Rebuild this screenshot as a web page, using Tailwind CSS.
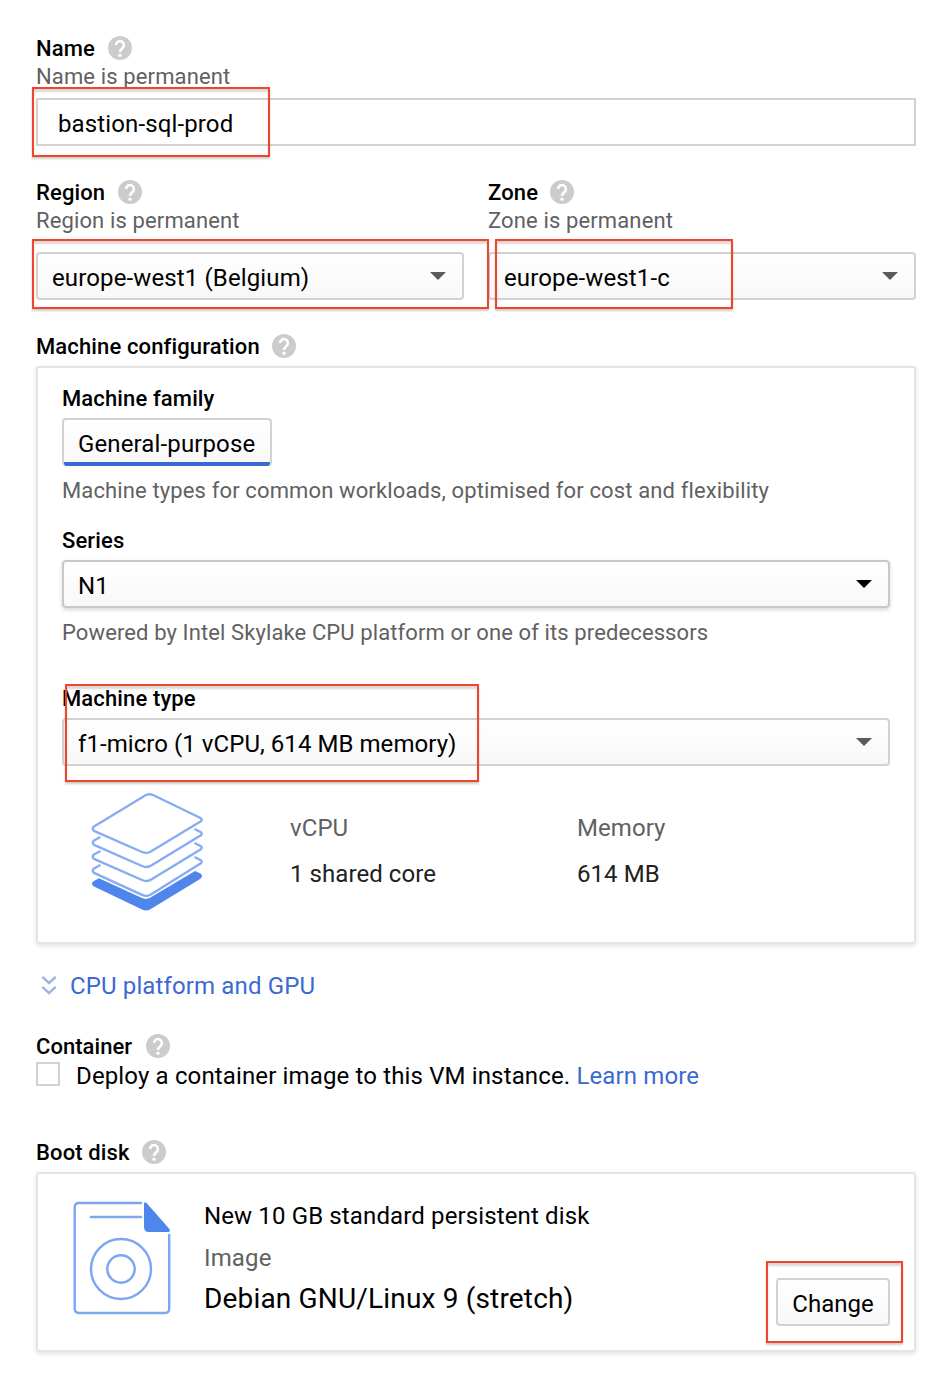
<!DOCTYPE html>
<html lang="en">
<head>
<meta charset="utf-8">
<title>Create an instance</title>
<script src="https://cdn.jsdelivr.net/npm/@tailwindcss/browser@4"></script>
</head>
<body class="bg-white">
<svg class="hidden">
  <symbol id="help" viewBox="0 0 24 24">
    <circle cx="12" cy="12" r="12" fill="#ccc"/>
    <path d="M8.100 9a3.900 3.900 0 1 1 6.600 2.800c-1.500 1.400-2.600 1.900-2.600 4.200" fill="none" stroke="#fff" stroke-width="2.500"/>
    <circle cx="12" cy="19.300" r="1.700" fill="#fff"/>
  </symbol>
  <symbol id="caret" viewBox="0 0 16 8"><path d="M0 0h16L8 8z" fill="currentColor"/></symbol>
</svg>
<main class="relative h-[1378px] w-[942px] overflow-hidden px-9 pt-[34px] pr-[26px] font-['Roboto',sans-serif] text-2xl tracking-[0.13px] whitespace-nowrap text-black">

  <section>
    <div class="flex h-7 items-center text-[22px] font-medium"><span class="w-[72px] pt-[2px]">Name</span><svg class="size-6"><use href="#help"/></svg></div>
    <div class="h-7 text-[22px] leading-[30px] text-[#616161]">Name is permanent</div>
    <div class="mt-2 flex h-12 items-center border-2 border-[#d2d2d2] px-5 pt-1">bastion-sql-prod</div>
  </section>

  <section class="mt-8 grid grid-cols-2 gap-6">
    <div>
      <div class="flex h-7 items-center text-[22px] font-medium"><span class="w-[82px] pt-[2px]">Region</span><svg class="size-6"><use href="#help"/></svg></div>
      <div class="h-7 text-[22px] leading-[30px] text-[#616161]">Region is permanent</div>
      <div class="mt-[18px] flex h-12 items-center justify-between rounded-[4px] border-2 border-[#d2d2d2] bg-linear-to-b from-white to-[#f8f8f8] px-[14px] pt-1 pr-4"><span>europe-west1 (Belgium)</span><svg class="mb-1 h-2 w-4 text-[#5a5a5a]"><use href="#caret"/></svg></div>
    </div>
    <div>
      <div class="flex h-7 items-center text-[22px] font-medium"><span class="w-[62px] pt-[2px]">Zone</span><svg class="size-6"><use href="#help"/></svg></div>
      <div class="h-7 text-[22px] leading-[30px] text-[#616161]">Zone is permanent</div>
      <div class="mt-[18px] flex h-12 items-center justify-between rounded-[4px] border-2 border-[#d2d2d2] bg-linear-to-b from-white to-[#f8f8f8] px-[14px] pt-1 pr-4"><span>europe-west1-c</span><svg class="mb-1 h-2 w-4 text-[#5a5a5a]"><use href="#caret"/></svg></div>
    </div>
  </section>

  <section class="mt-8">
    <div class="flex h-7 items-center text-[22px] font-medium"><span class="w-[236px] pt-[2px]">Machine configuration</span><svg class="size-6"><use href="#help"/></svg></div>
    <div class="mt-[6px] h-[578px] rounded-[3px] border-2 border-[#e4e4e4] px-6 pt-4 shadow-[0_2px_5px_rgba(0,0,0,0.12)]">
      <div class="h-7 text-[22px] leading-[30px] font-medium">Machine family</div>
      <div class="mt-[6px] flex h-12 w-[210px] flex-col overflow-hidden rounded-[4px] border-2 border-b-0 border-[#d2d2d2] bg-linear-to-b from-white to-[#f8f8f8]">
        <div class="h-[42px] px-[14px] pt-[3px] leading-[42px]">General-purpose</div>
        <div class="h-1 bg-[#3b69d1]"></div>
      </div>
      <div class="mt-[10px] h-7 text-[22px] leading-[30px] text-[#616161]">Machine types for common workloads, optimised for cost and flexibility</div>
      <div class="mt-[22px] h-7 text-[22px] leading-[30px] font-medium">Series</div>
      <div class="mt-[6px] flex h-12 items-center justify-between rounded-[4px] border-2 border-[#c8c8c8] bg-linear-to-b from-white to-[#f8f8f8] px-[14px] pt-1 pr-4 shadow-[0_2px_4px_rgba(0,0,0,0.15)]"><span>N1</span><svg class="mb-1 h-2 w-4 text-black"><use href="#caret"/></svg></div>
      <div class="mt-[10px] h-7 text-[22px] leading-[30px] tracking-[0.11px] text-[#616161]">Powered by Intel Skylake CPU platform or one of its predecessors</div>
      <div class="mt-[38px] h-7 text-[22px] leading-[30px] font-medium">Machine type</div>
      <div class="mt-[6px] flex h-12 items-center justify-between rounded-[4px] border-2 border-[#d2d2d2] bg-linear-to-b from-white to-[#f8f8f8] px-[14px] pt-1 pr-4"><span class="tracking-[0.06px]">f1-micro (1 vCPU, 614 MB memory)</span><svg class="mb-1 h-2 w-4 text-[#5a5a5a]"><use href="#caret"/></svg></div>
      <div class="flex pt-[14px] tracking-[0.07px]">
        <svg class="ml-2 h-[150px] w-[160px]" viewBox="70 780 160 150" fill="none" stroke="#86acf3" stroke-width="2.400" stroke-linejoin="round">
          <path d="M94 830.800L142 852Q146 853.800 150 852L200.500 821.500Q203 819.700 200.500 818L153 795Q149.500 793.600 146 795L94 826.500Q91.500 828.700 94 830.800Z"/>
          <path d="M100.500 837L94 840.500Q91.500 842.700 94 844.800L142 866Q146 867.800 150 866.200L200.500 835.500Q203 833.500 200.500 832L194.500 829"/>
          <path d="M100.500 851L94 854.500Q91.500 856.700 94 858.800L142 880Q146 881.800 150 880.200L200.500 849.500Q203 847.500 200.500 846L194.500 843"/>
          <path d="M100.500 865L94 868.500Q91.500 870.700 94 872.800L142 894.800Q146 896.800 150 895L200.500 863.500Q203 861.500 200.500 860L194.500 857"/>
          <path d="M99 878.300L93.500 881.300Q90.500 883.800 93.500 886.300L142 909.500Q146 911.600 150 909.500L200.500 878.700Q203.500 876 200.500 873.500L195 871L150 897.800Q146 899.800 142 898.100Z" fill="#4f86ec" stroke="none"/>
        </svg>
        <div class="ml-[60px] w-[287px] pt-6"><div class="h-12 leading-[48px] text-[#616161]">vCPU</div><div class="-mt-0.5 h-12 leading-[48px] text-[#212121]">1 shared core</div></div>
        <div class="pt-6"><div class="h-12 leading-[48px] text-[#616161]">Memory</div><div class="-mt-0.5 h-12 leading-[48px] text-[#212121]">614 MB</div></div>
      </div>
    </div>
  </section>

  <div class="mt-6 flex h-9 items-center text-[#3b69d1]">
    <svg class="mr-[14px] ml-[5px] h-5 w-[15px]" viewBox="0 0 15 20" fill="none" stroke="#9db6ea" stroke-width="2.400"><path d="M1.300 .8L8 7L14.700 .8M1.300 10.800L8 17L14.700 10.800"/></svg>
    <span>CPU platform and GPU</span>
  </div>

  <section class="mt-7">
    <div class="flex h-7 items-center text-[22px] font-medium"><span class="w-[110px] pt-[2px] tracking-[0.05px]">Container</span><svg class="size-6"><use href="#help"/></svg></div>
    <div class="mt-[2px] flex h-6 items-center">
      <span class="mr-4 size-6 border-2 border-[#d2d2d2]"></span>
      <span class="pt-1 tracking-[0.14px]">Deploy a container image to this VM instance. <span class="text-[#3b69d1]">Learn more</span></span>
    </div>
  </section>

  <section class="mt-[52px]">
    <div class="flex h-7 items-center text-[22px] font-medium"><span class="w-[106px] pt-[2px]">Boot disk</span><svg class="size-6"><use href="#help"/></svg></div>
    <div class="mt-[6px] flex h-[180px] rounded-[3px] border-2 border-[#e4e4e4] shadow-[0_2px_5px_rgba(0,0,0,0.12)]">
      <svg class="mt-[26px] ml-[34px] h-[116px] w-[100px]" viewBox="72 1200 100 116" fill="none" stroke="#7ca6f4" stroke-width="2.400" stroke-linecap="round">
        <path d="M141 1203H79Q74.700 1203 74.700 1207.500V1308.500Q74.700 1313 79 1313H165Q169.200 1313 169.200 1308.500V1235M91 1217H141"/>
        <circle cx="121" cy="1269" r="30"/><circle cx="121" cy="1269" r="13.700"/>
        <path d="M144 1204Q144 1201 147 1203.500L169 1228.500Q171.500 1232 167.500 1232H149Q144 1232 144 1227Z" fill="#4f86ec" stroke="none"/>
      </svg>
      <div class="ml-8 grow pt-6"><div class="h-9 leading-9">New 10 GB standard persistent disk</div><div class="mt-[6px] h-9 leading-9 text-[#616161]">Image</div><div class="mt-[5px] h-9 text-[28px] leading-9 tracking-[0.17px]">Debian GNU/Linux 9 (stretch)</div></div>
      <div class="mt-[104px] mr-6 flex h-12 w-[114px] items-center justify-center rounded-[4px] border-2 border-[#d2d2d2] bg-linear-to-b from-white to-[#f8f8f8] pt-1 tracking-normal">Change</div>
    </div>
  </section>

  <!-- Highlight frames laid over the form -->
  <div class="absolute top-[87px] left-[32px] h-[70px] w-[238px] border-2 border-[#f0452a] shadow-[0_2px_2px_rgba(0,0,0,0.2),inset_0_3px_2px_rgba(0,0,0,0.15)]"></div>
  <div class="absolute top-[239px] left-[32px] h-[70px] w-[457px] border-2 border-[#f0452a] shadow-[0_2px_2px_rgba(0,0,0,0.2),inset_0_3px_2px_rgba(0,0,0,0.15)]"></div>
  <div class="absolute top-[239px] left-[495px] h-[70px] w-[238px] border-2 border-[#f0452a] shadow-[0_2px_2px_rgba(0,0,0,0.2),inset_0_3px_2px_rgba(0,0,0,0.15)]"></div>
  <div class="absolute top-[684px] left-[65px] h-[98px] w-[414px] border-2 border-[#f0452a] shadow-[0_2px_2px_rgba(0,0,0,0.2),inset_0_3px_2px_rgba(0,0,0,0.15)]"></div>
  <div class="absolute top-[1261px] left-[766px] h-[82px] w-[137px] border-2 border-[#f0452a] shadow-[0_2px_2px_rgba(0,0,0,0.2),inset_0_3px_2px_rgba(0,0,0,0.15)]"></div>
</main>
</body>
</html>
